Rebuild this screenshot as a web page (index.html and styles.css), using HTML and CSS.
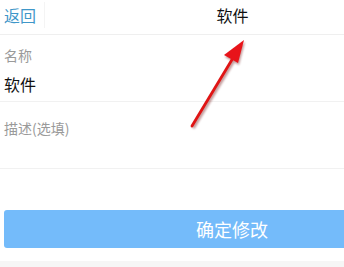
FILE: index.html
```html
<!DOCTYPE html>
<html>
<head>
<meta charset="utf-8">
<link rel="stylesheet" href="styles.css">
</head>
<body>
<div class="page">
  <header class="bar">
    <div class="back">返回</div>
    <div class="title">软件</div>
  </header>
  <section class="field name">
    <div class="label">名称</div>
    <div class="value">软件</div>
  </section>
  <section class="field desc">
    <div class="label">描述(选填)</div>
  </section>
  <div class="actions">
    <div class="btn">确定修改</div>
  </div>
  <div class="footer"></div>
  <svg class="arrow" width="344" height="267" viewBox="0 0 344 267">
    <defs>
      <filter id="sh" x="-20%" y="-20%" width="140%" height="140%">
        <feGaussianBlur stdDeviation="0.8"/>
      </filter>
    </defs>
    <g filter="url(#sh)" opacity="0.4">
      <line x1="193" y1="128" x2="234" y2="60" stroke="#600" stroke-width="3.4"/>
      <polygon points="245,42 239,65 225,57" fill="#600"/>
    </g>
    <line x1="192" y1="126" x2="233" y2="58" stroke="#e01414" stroke-width="2.8" stroke-linecap="round"/>
    <polygon points="244,40 238,63 224,55" fill="#e8141a"/>
  </svg>
</div>
</body>
</html>
```
FILE: styles.css
```css
html, body {
  margin: 0;
  padding: 0;
  background: #fff;
  overflow: hidden;
}
body {
  width: 344px;
  height: 267px;
  font-family: "Noto Sans CJK SC", "Liberation Sans", sans-serif;
}
.page {
  position: relative;
  width: 344px;
  height: 267px;
  display: flex;
  flex-direction: column;
}
.bar {
  height: 34px;
  display: flex;
  align-items: center;
  border-bottom: 1px solid #efefef;
  position: relative;
}
.back {
  width: 40px;
  height: 26px;
  padding-left: 4px;
  margin-top: -4px;
  font-size: 16px;
  line-height: 26px;
  color: #3f97c9;
  border-right: 1px solid #f4f4f4;
  flex: none;
}
.title {
  flex: 1;
  margin-top: -5px;
  padding-left: 76px;
  text-align: center;
  font-size: 16px;
  line-height: 22px;
  color: #111;
}
.field {
  padding: 0 4px;
  border-bottom: 1px solid #f1f1f1;
  box-sizing: border-box;
}
.name {
  height: 67px;
  padding-top: 10px;
}
.label {
  font-size: 14px;
  line-height: 20px;
  color: #9a9a9a;
}
.value {
  margin-top: 8px;
  font-size: 16px;
  line-height: 22px;
  color: #111;
}
.desc {
  height: 67px;
  padding-top: 16px;
}
.actions {
  padding: 41px 0 0 4px;
}
.btn {
  height: 38px;
  border-radius: 3px 0 0 3px;
  background: #74bbfa;
  color: #fff;
  font-size: 18px;
  line-height: 38px;
  text-align: center;
  padding-left: 116px;
}
.footer {
  margin-top: 13px;
  flex: 1;
  background: #f6f6f6;
}
.arrow {
  position: absolute;
  left: 0;
  top: 0;
}
```
